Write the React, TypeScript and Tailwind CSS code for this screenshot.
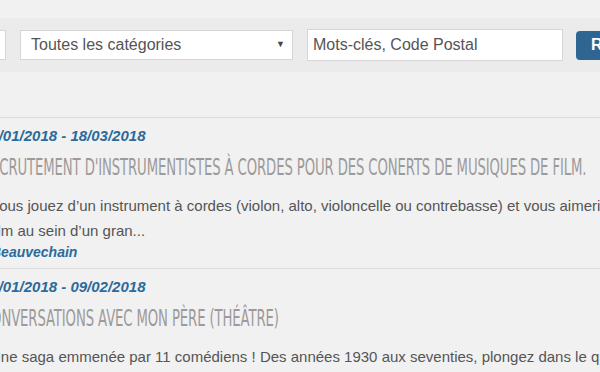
import { Search } from "lucide-react";

const events = [
  {
    dates: "18/01/2018 - 18/03/2018",
    title: "Recrutement d'instrumentistes à cordes pour des conerts de musiques de film.",
    lines: [
      "Vous jouez d’un instrument à cordes (violon, alto, violoncelle ou contrebasse) et vous aimeriez jouer de la musique de",
      "film au sein d’un gran...",
    ],
    place: "Beauvechain",
  },
  {
    dates: "18/01/2018 - 09/02/2018",
    title: "Conversations avec mon père (théâtre)",
    lines: [
      "Une saga emmenée par 11 comédiens ! Des années 1930 aux seventies, plongez dans le quotidien d’une famille",
    ],
    place: "",
  },
];

export default function App() {
  return (
    <div className="w-[600px] h-[372px] overflow-hidden bg-[#f1f1f1] font-['Liberation_Sans',Arial,sans-serif]">
      {/* Filters */}
      <div className="mt-[18px] h-[54px] bg-[#ebebeb] flex items-center">
        <div className="shrink-0 ml-[-100px] w-[106px] h-[30px] bg-white border border-[#d6d6d6]" />
        <div className="shrink-0 ml-[14px] w-[273px] h-[30px] bg-white border border-[#d6d6d6] flex items-center justify-between pl-[10px] pr-[7px]">
          <span className="text-[16px] text-[#555]">Toutes les catégories</span>
          <span className="text-[9px] text-[#444]">▼</span>
        </div>
        <div className="shrink-0 ml-[14px] w-[256px] h-[32px] bg-white border border-[#d6d6d6] flex items-center pl-[5px]">
          <span className="text-[16px] text-[#555]">Mots-clés, Code Postal</span>
        </div>
        <button className="shrink-0 ml-[13px] h-[29px] px-[15px] rounded-[4px] bg-[#2e6691] text-white font-bold text-[16px] flex items-center gap-1">
          Rechercher <Search className="w-4 h-4" />
        </button>
      </div>

      <div className="mt-[45px] border-t border-[#dcdcdc]">
        {events.map((e, i) => (
          <div key={i} className="ml-[-18px] border-b border-[#dcdcdc] pt-[8px] pb-[7px] w-[900px]">
            <div className="text-[15px] font-bold italic text-[#2c6a9a] leading-[20px]">{e.dates}</div>
            <div className="mt-[8px] h-[26px] whitespace-nowrap">
              <span className="inline-block origin-left scale-x-[0.575] uppercase text-[23px] leading-[26px] text-[#9d9a9a] font-['Liberation_Sans_Narrow','DejaVu_Sans',sans-serif] tracking-[-0.2px]">
                {e.title}
              </span>
            </div>
            <div className="mt-[13px] ml-[8px] text-[15px] leading-[25px] text-[#555]">
              {e.lines.map((l, j) => (
                <div key={j} className="whitespace-nowrap">{l}</div>
              ))}
            </div>
            {e.place && (
              <div className="ml-[9px] text-[14px] font-bold italic text-[#2c6a9a] leading-[18px]">{e.place}</div>
            )}
          </div>
        ))}
      </div>
    </div>
  );
}
